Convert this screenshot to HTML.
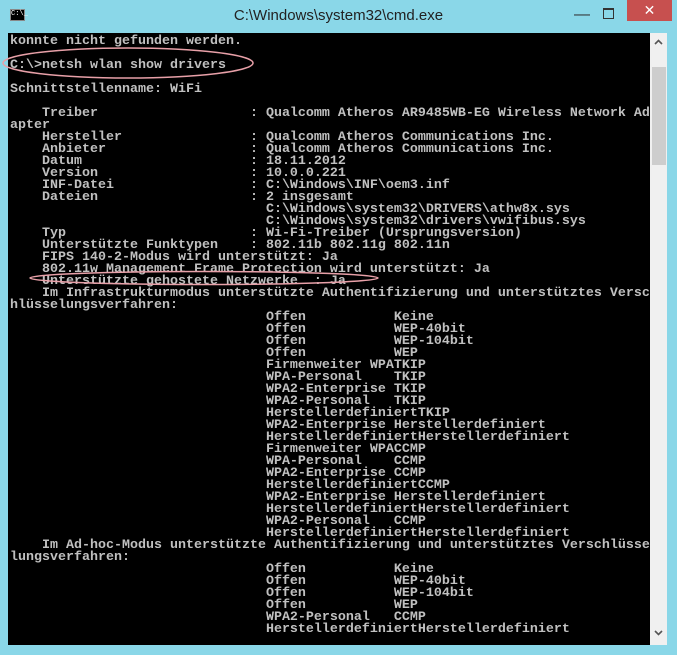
<!DOCTYPE html>
<html><head><meta charset="utf-8"><style>
body{margin:0;width:677px;height:655px;background:#8ad7e8;position:relative;overflow:hidden;font-family:"Liberation Sans",sans-serif}
#title{position:absolute;left:0;top:7px;width:677px;text-align:center;font-size:15px;color:#222;}
#con{position:absolute;left:8px;top:33px;width:642px;height:612px;background:#000;overflow:hidden}
pre{margin:0;position:absolute;left:2px;top:3px;font-family:"Liberation Mono",monospace;font-size:13.33px;line-height:12px;color:#c0c0c0;font-weight:bold;letter-spacing:0}
#sb{position:absolute;left:650px;top:33px;width:17px;height:612px;background:#f0f0f0}
#thumb{position:absolute;left:2px;top:34px;width:14px;height:98px;background:#cdcdcd}
#close{position:absolute;left:627px;top:0;width:45px;height:21px;background:#c7504f;color:#fff;text-align:center;font-size:14px;line-height:21px}
</style></head><body>
<div style="position:absolute;left:10px;top:9px;width:15px;height:12px;background:#000;border:1px solid #888;box-sizing:border-box;color:#fff;font-size:7px;line-height:9px;font-family:'Liberation Mono',monospace">C:\_</div>
<div id="title">C:\Windows\system32\cmd.exe</div>
<div style="position:absolute;left:574px;top:6px;font-size:16px;color:#333">&#8212;</div>
<div style="position:absolute;left:603px;top:8px;width:9px;height:8px;border:1px solid #333;border-top-width:2px"></div>
<div id="close">✕</div>
<div id="con"><pre>konnte nicht gefunden werden.

C:\>netsh wlan show drivers

Schnittstellenname: WiFi

    Treiber                   : Qualcomm Atheros AR9485WB-EG Wireless Network Ad
apter
    Hersteller                : Qualcomm Atheros Communications Inc.
    Anbieter                  : Qualcomm Atheros Communications Inc.
    Datum                     : 18.11.2012
    Version                   : 10.0.0.221
    INF-Datei                 : C:\Windows\INF\oem3.inf
    Dateien                   : 2 insgesamt
                                C:\Windows\system32\DRIVERS\athw8x.sys
                                C:\Windows\system32\drivers\vwifibus.sys
    Typ                       : Wi-Fi-Treiber (Ursprungsversion)
    Unterstützte Funktypen    : 802.11b 802.11g 802.11n
    FIPS 140-2-Modus wird unterstützt: Ja
    802.11w Management Frame Protection wird unterstützt: Ja
    Unterstützte gehostete Netzwerke  : Ja
    Im Infrastrukturmodus unterstützte Authentifizierung und unterstütztes Versc
hlüsselungsverfahren:
                                Offen           Keine
                                Offen           WEP-40bit
                                Offen           WEP-104bit
                                Offen           WEP
                                Firmenweiter WPATKIP
                                WPA-Personal    TKIP
                                WPA2-Enterprise TKIP
                                WPA2-Personal   TKIP
                                HerstellerdefiniertTKIP
                                WPA2-Enterprise Herstellerdefiniert
                                HerstellerdefiniertHerstellerdefiniert
                                Firmenweiter WPACCMP
                                WPA-Personal    CCMP
                                WPA2-Enterprise CCMP
                                HerstellerdefiniertCCMP
                                WPA2-Enterprise Herstellerdefiniert
                                HerstellerdefiniertHerstellerdefiniert
                                WPA2-Personal   CCMP
                                HerstellerdefiniertHerstellerdefiniert
    Im Ad-hoc-Modus unterstützte Authentifizierung und unterstütztes Verschlüsse
lungsverfahren:
                                Offen           Keine
                                Offen           WEP-40bit
                                Offen           WEP-104bit
                                Offen           WEP
                                WPA2-Personal   CCMP
                                HerstellerdefiniertHerstellerdefiniert
</pre></div>
<svg style="position:absolute;left:0;top:0" width="677" height="655">
<ellipse cx="128" cy="63" rx="125" ry="15" fill="none" stroke="#e8a0a8" stroke-width="1.5"/>
<ellipse cx="204" cy="278" rx="174" ry="6.5" fill="none" stroke="#e8a0a8" stroke-width="1.5"/>
</svg>
<div id="sb"><div id="thumb"></div>
<svg style="position:absolute;left:4px;top:6px" width="9" height="6"><path d="M1 5 L4.5 1.5 L8 5" stroke="#555" stroke-width="1.6" fill="none"/></svg>
<svg style="position:absolute;left:4px;top:597px" width="9" height="6"><path d="M1 1 L4.5 4.5 L8 1" stroke="#555" stroke-width="1.6" fill="none"/></svg>
</div>
</body></html>
